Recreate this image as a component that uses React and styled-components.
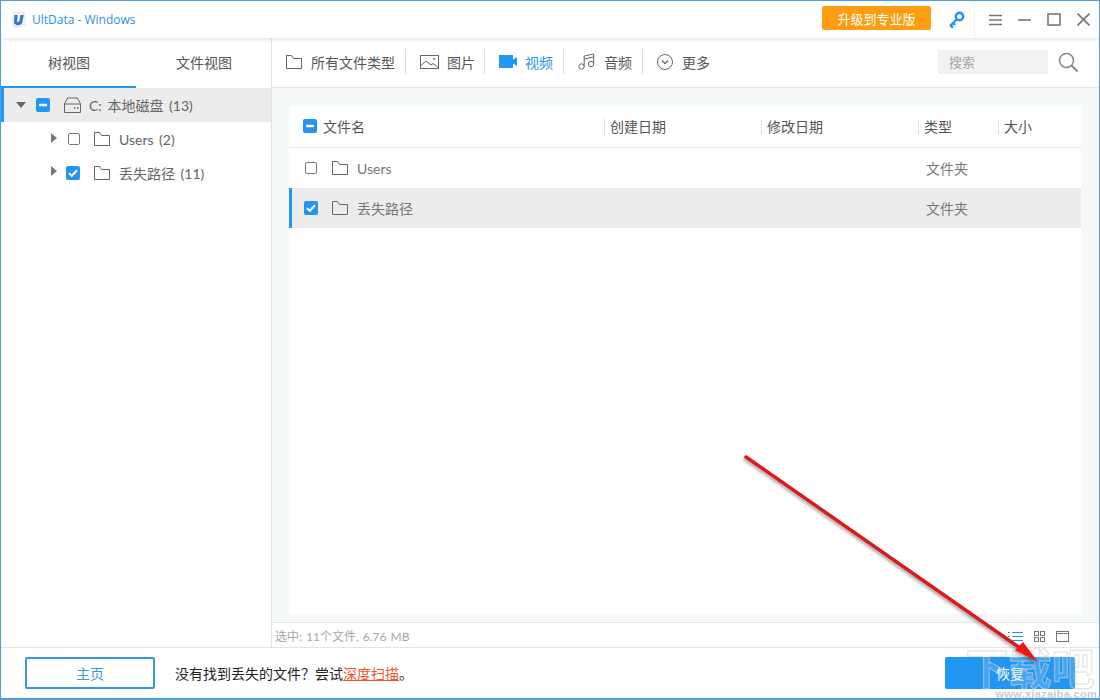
import React from 'react';
import styled, { createGlobalStyle } from 'styled-components';

const Global = createGlobalStyle`
  html, body { margin: 0; padding: 0; background: #fff; }
  * { box-sizing: border-box; }
  body { font-family: Lato, "Noto Sans CJK SC", sans-serif; }
`;
const Win = styled.div`
  position: relative; width: 1100px; height: 700px; border: 1px solid #4f9fdc; border-bottom-width: 2px;
  background: #fff; display: flex; flex-direction: column; overflow: hidden; color: #666;
`;
const TitleBar = styled.header`
  height: 37px; flex: none; display: flex; align-items: center; background: #fff; padding-left: 10px;
  box-shadow: 0 1px 5px rgba(0,0,0,.13); position: relative; z-index: 2;
`;
const AppName = styled.span`
  font: 12px "Open Sans", sans-serif; color: #2f8fdc; margin-left: 6px; flex: 1;
`;
const Upgrade = styled.button`
  width: 109px; height: 24px; border: 0; border-radius: 2px; background: #ff9c10; color: #fff; padding: 0;
  font: 13px "Noto Sans CJK SC", sans-serif; margin: 0 17px 3px 0;
`;
const WinControls = styled.div`
  display: flex; align-items: center; height: 37px; border-left: 1px solid #f0f0f0; margin-left: 9px; padding-left: 14px; gap: 16px; padding-right: 9px;
`;
const Body = styled.div` flex: 1; display: flex; min-height: 0; `;
const Side = styled.aside` width: 271px; flex: none; border-right: 1px solid #e4e4e4; display: flex; flex-direction: column; `;
const Tabs = styled.div` display: flex; height: 50px; flex: none; `;
const Tab = styled.div`
  width: ${p => p.$w}px; display: flex; align-items: center; padding-left: ${p => p.$pl}px; font: 14px "Noto Sans CJK SC", sans-serif; color: #555;
  border-bottom: 2px solid ${p => p.$on ? '#2196f3' : 'transparent'};
`;
const TreeRow = styled.div`
  height: ${p => p.$h}px; display: flex; align-items: center; padding-left: ${p => p.$pl}px;
  background: ${p => p.$on ? '#ececec' : 'transparent'};
  border-left: ${p => p.$on ? '3px solid #2196f3' : '0'};
  font: 14px Lato, "Noto Sans CJK SC", sans-serif; color: #666; word-spacing: 2px;
`;
const Caret = styled.i`
  width: 0; height: 0; display: block; flex: none;
  ${p => p.$down
    ? 'border-left: 5px solid transparent; border-right: 5px solid transparent; border-top: 6px solid #666;'
    : 'border-top: 5px solid transparent; border-bottom: 5px solid transparent; border-left: 6px solid #777; margin-top: -3px;'}
`;
const Check = styled.span`
  width: ${p => p.$kind === 'off' ? 12 : 14}px; height: ${p => p.$kind === 'off' ? 12 : 14}px; flex: none; border-radius: 2px;
  display: flex; align-items: center; justify-content: center;
  margin: ${p => p.$kind === 'off' ? '0 1px' : '0'};
  background: ${p => p.$kind === 'off' ? '#fff' : '#2196f3'};
  border: ${p => p.$kind === 'off' ? '1px solid #777' : '0'};
`;
const Gap = styled.span` width: ${p => p.$w}px; flex: none; display: block; `;
const Main = styled.main` flex: 1; display: flex; flex-direction: column; min-width: 0; `;
const Toolbar = styled.div`
  height: 50px; flex: none; display: flex; align-items: center; padding: 0 0 2px 14px; border-bottom: 1px solid #e6e6e6;
`;
const Tool = styled.div`
  display: flex; align-items: center; height: 25px; gap: ${p => p.$gap}px;
  font: 14px "Noto Sans CJK SC", sans-serif; color: ${p => p.$on ? '#2a93ea' : '#555'};
  padding-right: ${p => p.$pr ?? 10}px; margin-right: 14px; border-right: ${p => p.$last ? '0' : '1px solid #ddd'};
`;
const Search = styled.div`
  margin-left: auto; width: 110px; height: 24px; background: #f2f2f2; color: #a5a5a5; padding-left: 11px;
  font: 13px/24px "Noto Sans CJK SC", sans-serif;
`;
const SearchWrap = styled.div` margin-left: auto; display: flex; align-items: center; gap: 10px; padding-right: 21px; `;
const Content = styled.div` flex: 1; background: #f5f9fa; padding: 18px 18px 8px 17px; min-height: 0; border-bottom: 1px solid #e6e6e6; display: flex; `;
const Panel = styled.div` flex: 1; background: #fff; `;
const Grid = styled.div`
  display: grid; grid-template-columns: 315px 157px 157px 80px 1fr; align-items: center;
  height: ${p => p.$h}px;
  background: ${p => p.$sel ? '#ececec' : 'transparent'};
  box-shadow: ${p => p.$sel ? 'inset 3px 0 0 #2196f3' : 'none'};
  border-bottom: ${p => p.$head ? '1px solid #e6e6e6' : '0'};
  padding-bottom: ${p => p.$head ? 1 : 0}px;
  font: 14px Lato, "Noto Sans CJK SC", sans-serif; color: #666;
`;
const HeadCell = styled.div`
  display: flex; align-items: center; height: 15px; padding-left: ${p => p.$pl ?? 5}px;
  border-left: ${p => p.$first ? '0' : '1px solid #ddd'};
  font: 14px "Noto Sans CJK SC", sans-serif; color: #555;
`;
const NameCell = styled.div` display: flex; align-items: center; padding-left: 15px; grid-column: 1 / 4; color: #777; `;
const TypeCell = styled.div` grid-column: 4 / 5; padding-left: 8px; font: 14px "Noto Sans CJK SC", sans-serif; color: #777; margin-top: -1px; `;
const Status = styled.div`
  height: 24px; flex: none; display: flex; align-items: center; justify-content: space-between; padding: 0 30px 0 3px;
  font: 12px Lato, "Noto Sans CJK SC", sans-serif; color: #a8a8a8; word-spacing: 1px;
`;
const ViewIcons = styled.div` display: flex; align-items: center; gap: 11px; padding-top: 2px; `;
const Footer = styled.footer`
  height: 51px; flex: none; border-top: 1px solid #e4e4e4; display: flex; align-items: center; padding: 0 24px; position: relative;
`;
const HomeBtn = styled.button`
  width: 130px; height: 32px; background: #fff; border: 2px solid #3797e2; border-radius: 2px; color: #3797e2;
  font: 14px "Noto Sans CJK SC", sans-serif; padding: 0; margin-right: 20px;
`;
const Hint = styled.span` font: 14px "Noto Sans CJK SC", sans-serif; color: #222; flex: 1; `;
const Deep = styled.a` color: #f0562a; text-decoration: underline; `;
const RestoreBtn = styled.button`
  width: 130px; height: 32px; border: 0; border-radius: 2px; background: #2196f3; color: #fff;
  font: 14px "Noto Sans CJK SC", sans-serif; padding: 0;
`;
const ArrowLayer = styled.svg` position: absolute; left: -1px; top: -1px; pointer-events: none; z-index: 5; `;
const Watermark = styled.div`
  position: absolute; right: 2px; bottom: -2px; width: 134px; z-index: 4; pointer-events: none; text-align: right;
`;
const WmBig = styled.div`
  font: 700 43px/43px "Noto Sans CJK SC", sans-serif; color: rgba(255,255,255,.16);
  -webkit-text-stroke: 1px rgba(205,210,215,.7); white-space: nowrap; text-align: center;
`;
const WmSmall = styled.div`
  font: 700 11px/12px "Liberation Sans", sans-serif; letter-spacing: .3px; color: rgba(170,175,180,.65); white-space: nowrap;
`;

const Svg = ({ w, h, vb, c = '#666', sw = 1, children }) => (
  <svg width={w} height={h} viewBox={vb || `0 0 ${w} ${h}`} fill="none" stroke={c} strokeWidth={sw} style={{ flex: 'none', display: 'block' }}>{children}</svg>
);
const Folder = ({ c = '#666' }) => (
  <Svg w={16} h={14} c={c}><path d="M.5 13.500V.5h5l2 3h8v10z" /></Svg>
);
const Minus = () => <svg width="10" height="10" viewBox="0 0 10 10"><rect x="1" y="3.800" width="8" height="2.400" rx=".6" fill="#fff" /></svg>;
const Tick = () => <svg width="10" height="10" viewBox="0 0 10 10" fill="none" stroke="#fff" strokeWidth="2"><path d="M1 5.200l2.800 2.600L9 2.200" /></svg>;
const Chk = ({ kind }) => <Check $kind={kind}>{kind === 'mixed' ? <Minus /> : kind === 'on' ? <Tick /> : null}</Check>;

export default function App() {
  return (
    <Win>
      <Global />
      <TitleBar>
        <svg width="15" height="18" viewBox="0 0 15 18" style={{ flex: 'none' }}>
          <path d="M2.500 2L13 1l1.500 13-11 3L1 15z" fill="#f3efe8" stroke="#e2dcd2" strokeWidth=".6" />
          <path d="M3.500 4h3.200L6 9.500c-.2 2.200 2 2.200 2.500 0L9.500 4h3.200l-1.500 7.500c-.7 3.500-7.500 3.800-8.200 0z" fill="#2a78d0" />
        </svg>
        <AppName>UltData - Windows</AppName>
        <Upgrade>升级到专业版</Upgrade>
        <svg width="17" height="18" viewBox="0 0 17 18" fill="none" style={{ flex: 'none' }}>
          <circle cx="11.500" cy="5.500" r="3.700" stroke="#2a8fe8" strokeWidth="2.400" />
          <path d="M8.500 8.500L2 15M2.500 14.500l2.500 2M5 12l2 2" stroke="#2a8fe8" strokeWidth="2.400" />
        </svg>
        <WinControls>
          <Svg w={13} h={12} c="#777" sw={1.6}><path d="M0 1.500h13M0 6h13M0 10.500h13" /></Svg>
          <Svg w={13} h={12} c="#777" sw={1.6}><path d="M0 6h13" /></Svg>
          <Svg w={14} h={13} c="#777" sw={1.6}><rect x="1" y="1" width="12" height="11" /></Svg>
          <Svg w={13} h={13} c="#777" sw={1.6}><path d="M.5.500l12 12M12.500.500l-12 12" /></Svg>
        </WinControls>
      </TitleBar>
      <Body>
        <Side>
          <Tabs>
            <Tab $w={135} $pl={47} $on>树视图</Tab>
            <Tab $w={135} $pl={40}>文件视图</Tab>
          </Tabs>
          <TreeRow $h={34} $on $pl={12}>
            <Caret $down /><Gap $w={10} /><Chk kind="mixed" /><Gap $w={14} />
            <Svg w={17} h={16} c="#666"><path d="M.5 7L3.500 1h10l3 6v8.500H.5zM.5 7h16" /><path d="M10 11h1.500M13 11h1.500" strokeWidth={1.500} /></Svg>
            <Gap $w={8} />C: 本地磁盘 (13)
          </TreeRow>
          <TreeRow $h={34} $pl={50}>
            <Caret /><Gap $w={10} /><Chk kind="off" /><Gap $w={13} /><Folder /><Gap $w={9} />Users (2)
          </TreeRow>
          <TreeRow $h={33} $pl={50}>
            <Caret /><Gap $w={9} /><Chk kind="on" /><Gap $w={14} /><Folder /><Gap $w={9} />丢失路径 (11)
          </TreeRow>
        </Side>
        <Main>
          <Toolbar>
            <Tool $gap={9}><Folder />所有文件类型</Tool>
            <Tool $gap={8} $pr={9}>
              <Svg w={19} h={14} c="#666"><rect x=".5" y=".5" width="18" height="13" /><path d="M.5 11L6 6l5 4 2-1.500 5.500 4" /><circle cx="14" cy="4" r="1" fill="#666" stroke="none" /></Svg>
              图片
            </Tool>
            <Tool $gap={8} $on>
              <svg width="18" height="13" viewBox="0 0 18 13" style={{ flex: 'none' }}><rect width="14" height="13" fill="#2196f3" /><path d="M14 4.500L18 2v9l-4-2.500z" fill="#2196f3" /></svg>
              视频
            </Tool>
            <Tool $gap={9}>
              <Svg w={17} h={17} c="#666"><circle cx="3.500" cy="13.500" r="2.700" /><circle cx="13" cy="11" r="2.700" /><path d="M6.200 13.500V3L15.700 1v10M6.200 6l9.500-2" /></Svg>
              音频
            </Tool>
            <Tool $gap={9} $last>
              <Svg w={16} h={16} c="#666"><circle cx="8" cy="8" r="7.500" /><path d="M5 6.500l3 3 3-3" strokeWidth={1.300} /></Svg>
              更多
            </Tool>
            <SearchWrap>
              <Search>搜索</Search>
              <Svg w={20} h={20} c="#888" sw={1.600}><circle cx="8.500" cy="8.500" r="7" /><path d="M13.500 13.500l6 6" strokeWidth={2} /></Svg>
            </SearchWrap>
          </Toolbar>
          <Content>
            <Panel>
              <Grid $h={42} $head>
                <HeadCell $first $pl={14}><Chk kind="mixed" /><Gap $w={6} />文件名</HeadCell>
                <HeadCell>创建日期</HeadCell>
                <HeadCell>修改日期</HeadCell>
                <HeadCell>类型</HeadCell>
                <HeadCell>大小</HeadCell>
              </Grid>
              <Grid $h={40}>
                <NameCell><Chk kind="off" /><Gap $w={14} /><Folder /><Gap $w={9} />Users</NameCell>
                <TypeCell>文件夹</TypeCell>
              </Grid>
              <Grid $h={40} $sel>
                <NameCell><Chk kind="on" /><Gap $w={14} /><Folder /><Gap $w={9} />丢失路径</NameCell>
                <TypeCell>文件夹</TypeCell>
              </Grid>
            </Panel>
          </Content>
          <Status>
            选中: 11个文件, 6.76 MB
            <ViewIcons>
              <Svg w={15} h={11} c="#2a8fe0"><path d="M0 1.500h2M4 1.500h11M0 5.500h2M4 5.500h11M0 9.500h2M4 9.500h11" /></Svg>
              <Svg w={11} h={11} c="#777"><rect x=".5" y=".5" width="4" height="4" /><rect x="6.500" y=".5" width="4" height="4" /><rect x=".5" y="6.500" width="4" height="4" /><rect x="6.500" y="6.500" width="4" height="4" /></Svg>
              <Svg w={13} h={11} c="#777"><rect x=".5" y=".5" width="12" height="10" /><path d="M.5 2.500h12" /></Svg>
            </ViewIcons>
          </Status>
        </Main>
      </Body>
      <Footer>
        <HomeBtn>主页</HomeBtn>
        <Hint>没有找到丢失的文件？尝试<Deep>深度扫描</Deep>。</Hint>
        <RestoreBtn>恢复</RestoreBtn>
      </Footer>
      <Watermark>
        <WmBig>下载吧</WmBig>
        <WmSmall>www.xiazaiba.com</WmSmall>
      </Watermark>
      <ArrowLayer width="1100" height="700" viewBox="0 0 1100 700">
        <defs>
          <filter id="s" x="-5%" y="-5%" width="110%" height="110%"><feDropShadow dx="-1" dy="2" stdDeviation="1.500" floodColor="#000" floodOpacity=".35" /></filter>
        </defs>
        <g filter="url(#s)">
          <path d="M746 457L1020 648" stroke="#d81e1e" strokeWidth="3.500" strokeLinecap="round" />
          <path d="M1038 662L1015 650L1023 642z" fill="#f01414" />
        </g>
      </ArrowLayer>
    </Win>
  );
}
